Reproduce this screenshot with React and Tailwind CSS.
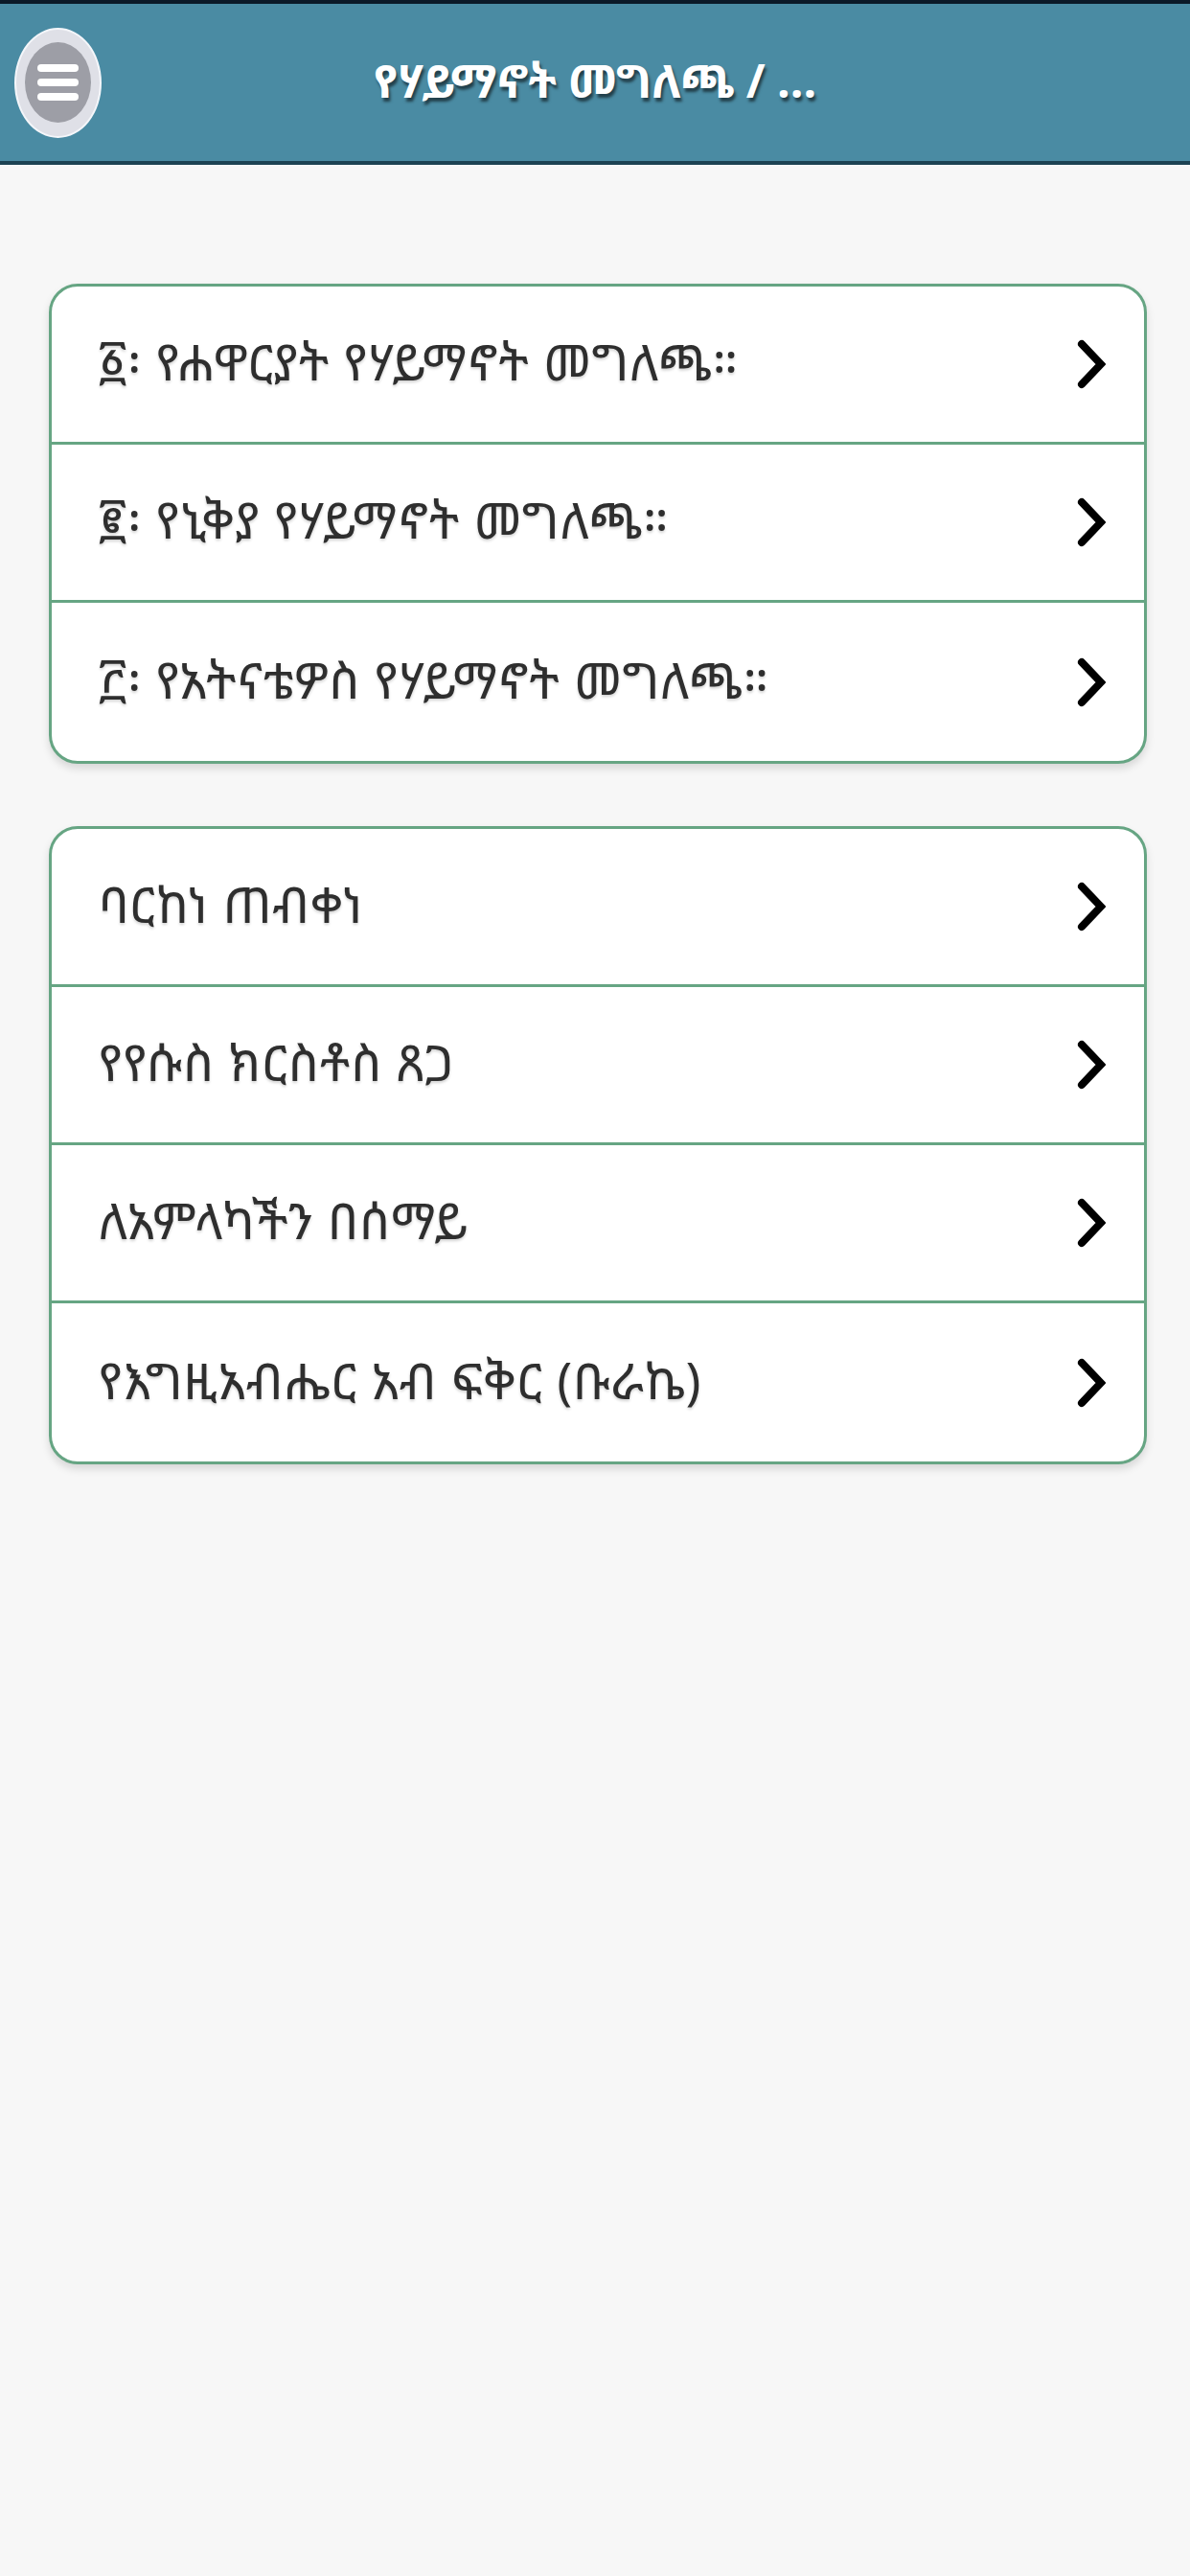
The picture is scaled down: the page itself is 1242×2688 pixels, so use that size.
import React from "react";

const ethFont = {
  fontFamily:
    '"Noto Sans Ethiopic", "Abyssinica SIL", "DejaVu Sans", "Noto Sans", sans-serif',
};

function Chevron() {
  return (
    <svg width="30" height="52" viewBox="0 0 30 52" className="shrink-0">
      <polyline
        points="5,5 25,26 5,47"
        fill="none"
        stroke="#000"
        strokeWidth="8"
        strokeLinecap="round"
        strokeLinejoin="miter"
      />
    </svg>
  );
}

function Row({ text, last }) {
  return (
    <div
      className={`flex h-[165px] items-center justify-between pl-[49px] pr-[40px] ${
        last ? "" : "border-b-[3px] border-[#66a583]"
      }`}
    >
      <span
        className="pb-[6px] text-[52px] tracking-[1px] text-[#2e2e2e] [text-shadow:0_2px_3px_rgba(0,0,0,0.18)]"
        style={ethFont}
      >
        {text}
      </span>
      <Chevron />
    </div>
  );
}

function Card({ items }) {
  return (
    <div className="ml-[51px] w-[1146px] overflow-hidden rounded-[30px] border-[3px] border-[#66a583] bg-white shadow-[0_5px_8px_rgba(0,0,0,0.13)]">
      {items.map((t, i) => (
        <Row key={i} text={t} last={i === items.length - 1} />
      ))}
    </div>
  );
}

export default function App() {
  const first = [
    "፩፡ የሐዋርያት የሃይማኖት መግለጫ።",
    "፪፡ የኒቅያ የሃይማኖት መግለጫ።",
    "፫፡ የአትናቴዎስ የሃይማኖት መግለጫ።",
  ];
  const second = [
    "ባርከነ ጠብቀነ",
    "የየሱስ ክርስቶስ ጸጋ",
    "ለአምላካችን በሰማይ",
    "የእግዚአብሔር አብ ፍቅር (ቡራኬ)",
  ];
  return (
    <div className="min-h-[2688px] w-[1242px] bg-[#f7f7f7]">
      <header className="grid h-[172px] grid-cols-[121px_1fr_121px] items-center border-t-[4px] border-b-[4px] border-t-[#0b1a28] border-b-[#1c4252] bg-[#4a8ba3]">
        <div className="flex items-center pl-[15px]">
          <div className="flex h-[115px] w-[91px] items-center justify-center rounded-[50%] border-[2px] border-[#f4f6fa] bg-[#dfe0e7]">
            <div className="flex h-[84px] w-[69px] flex-col items-center justify-center gap-[7px] rounded-[50%] bg-[#9d9ea6]">
              <div className="h-[8px] w-[43px] rounded-full bg-white" />
              <div className="h-[8px] w-[43px] rounded-full bg-white" />
              <div className="h-[8px] w-[43px] rounded-full bg-white" />
            </div>
          </div>
        </div>
        <div
          className="pb-[4px] text-center text-[48px] font-bold text-white [text-shadow:2px_4px_3px_rgba(0,0,0,0.55)]"
          style={ethFont}
        >
          የሃይማኖት መግለጫ / ...
        </div>
        <div />
      </header>
      <div className="pt-[124px]">
        <Card items={first} />
        <div className="h-[65px]" />
        <Card items={second} />
      </div>
    </div>
  );
}
